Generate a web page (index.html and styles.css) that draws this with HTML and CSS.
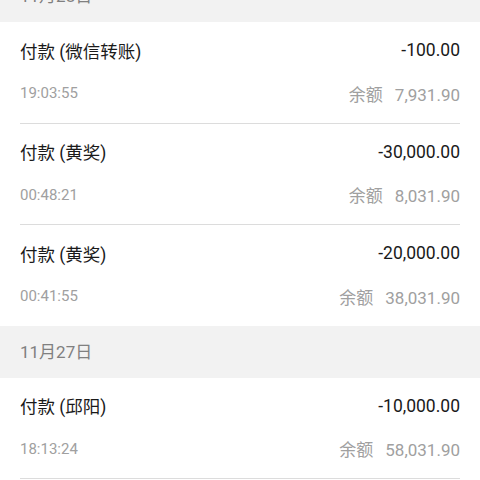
FILE: index.html
```html
<!DOCTYPE html>
<html lang="zh-CN">

<head>
    <meta charset="UTF-8">
    <meta name="viewport" content="width=device-width, initial-scale=1.0">
    <title>零钱明细</title>
    <link rel="stylesheet" href="styles.css">
</head>

<body>
    <div class="list">
        <div class="day">11月28日</div>
        <div class="group">
            <div class="item">
                <div class="row">
                    <span class="title">付款 (微信转账)</span>
                    <span class="amount">-100.00</span>
                </div>
                <div class="row sub">
                    <span class="time">19:03:55</span>
                    <span class="balance"><em>余额</em>7,931.90</span>
                </div>
            </div>
            <div class="item">
                <div class="row">
                    <span class="title">付款 (黄奖)</span>
                    <span class="amount">-30,000.00</span>
                </div>
                <div class="row sub">
                    <span class="time">00:48:21</span>
                    <span class="balance"><em>余额</em>8,031.90</span>
                </div>
            </div>
            <div class="item end">
                <div class="row">
                    <span class="title">付款 (黄奖)</span>
                    <span class="amount">-20,000.00</span>
                </div>
                <div class="row sub">
                    <span class="time">00:41:55</span>
                    <span class="balance"><em>余额</em>38,031.90</span>
                </div>
            </div>
        </div>
        <div class="day">11月27日</div>
        <div class="group">
            <div class="item">
                <div class="row">
                    <span class="title">付款 (邱阳)</span>
                    <span class="amount">-10,000.00</span>
                </div>
                <div class="row sub">
                    <span class="time">18:13:24</span>
                    <span class="balance"><em>余额</em>58,031.90</span>
                </div>
            </div>
        </div>
    </div>
</body>

</html>
```

FILE: styles.css
```css
* {
    margin: 0;
    padding: 0;
    box-sizing: border-box;
}

body {
    background-color: #fff;
    font-family: Roboto, "Noto Sans CJK SC", sans-serif;
    overflow: hidden;
}

.list {
    margin-top: -30px;
}

.day {
    height: 52px;
    line-height: 52px;
    padding: 0 20px;
    background-color: #f2f2f2;
    color: #808080;
    font-size: 17px;
}

.group {
    background-color: #fff;
}

.item {
    margin: 0 20px;
    padding: 16px 0 17.5px;
    border-bottom: 1px solid #dcdcdc;
}

.item.end {
    border-bottom: none;
}

.row {
    display: flex;
    justify-content: space-between;
    align-items: center;
    height: 24px;
}

.row.sub {
    margin-top: 19px;
}

.title,
.amount {
    font-size: 17.5px;
    color: #1a1a1a;
}

.time {
    font-size: 15px;
    color: #a0a0a0;
}

.balance {
    font-size: 17px;
    color: #a0a0a0;
}

.balance em {
    font-style: normal;
    margin-right: 12px;
}
```
